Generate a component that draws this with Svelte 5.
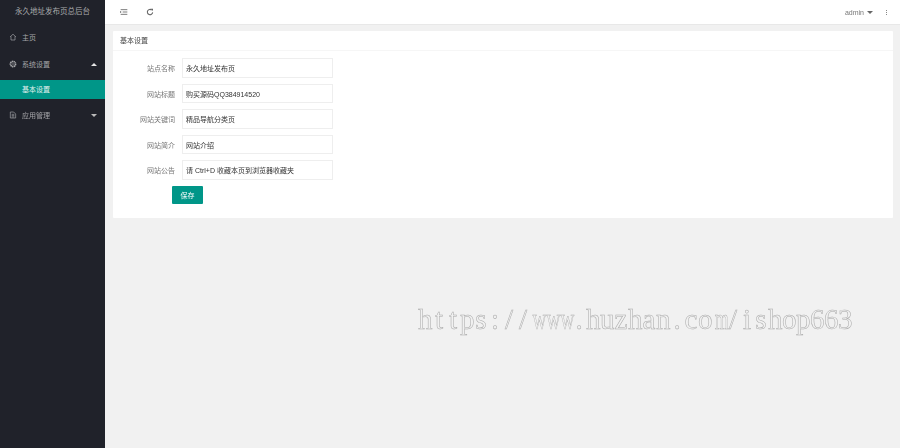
<script>
  let fields = [
    { label: '站点名称', value: '永久地址发布页' },
    { label: '网站标题', value: '购买源码QQ384914520' },
    { label: '网站关键词', value: '精品导航分类页' },
    { label: '网站简介', value: '网站介绍' },
    { label: '网站公告', value: '请 Ctrl+D 收藏本页到浏览器收藏夹' }
  ];
  // watermark is a fixed-pitch serif: squeeze the wide letters into the cell
  let squeeze = { w: 0.66, m: 0.62 };
  let mark = [...'https://www.huzhan.com/ishop663'];
</script>

<div class="app">
  <aside class="side">
    <div class="logo">永久地址发布页总后台</div>
    <nav>
      <div class="item">
        <svg class="ico" viewBox="0 0 12 12"><path d="M1.500 6 6 1.800 10.500 6M3 5v5.500h6V5" fill="none" stroke="currentColor" stroke-width="1"/></svg>
        <span>主页</span>
      </div>
      <div class="item open">
        <svg class="ico" viewBox="0 0 12 12"><circle cx="6" cy="6" r="3.800" fill="none" stroke="currentColor" stroke-width="2.600" stroke-dasharray="2 .6"/><circle cx="6" cy="6" r="1" fill="currentColor"/></svg>
        <span>系统设置</span>
        <i class="up"></i>
      </div>
      <div class="sub">基本设置</div>
      <div class="item last">
        <svg class="ico" viewBox="0 0 12 12"><path d="M2 1.500h5l3 3v6H2zM4 5h4M4 7h4M4 9h4" fill="none" stroke="currentColor" stroke-width="1"/></svg>
        <span>应用管理</span>
        <i class="down"></i>
      </div>
    </nav>
  </aside>

  <div class="main">
    <header class="top">
      <div class="tools">
        <svg class="tool" viewBox="0 0 12 12"><path d="M1 2.500h10M4 6h7M1 9.500h10M1 4.500v3" fill="none" stroke="currentColor" stroke-width="1.300"/></svg>
        <svg class="tool" viewBox="0 0 12 12"><path d="M10 6.600A4 4 0 1 1 8.600 3" fill="none" stroke="currentColor" stroke-width="1.600"/><path d="M7 1h3.500v3.500z" fill="currentColor"/></svg>
      </div>
      <div class="user">
        <span>admin</span>
        <i class="caret"></i>
        <span class="dots"><b></b><b></b><b></b></span>
      </div>
    </header>

    <div class="content">
      <section class="card">
        <div class="card-hd">基本设置</div>
        <form class="form" onsubmit={(e) => e.preventDefault()}>
          {#each fields as f (f.label)}
            <div class="row">
              <label for={f.label}>{f.label}</label>
              <input id={f.label} value={f.value} />
            </div>
          {/each}
          <button type="submit">保存</button>
        </form>
      </section>
    </div>
  </div>

  <div class="mark">{#each mark as c, i (i)}<span style={squeeze[c] ? `transform: scaleX(${squeeze[c]})` : ''}>{c}</span>{/each}</div>
</div>

<style>
  :global(body) { margin: 0; background: #f1f1f1; }
  .app { position: relative; display: flex; width: 900px; height: 448px; overflow: hidden; font-family: "Liberation Sans", "Noto Sans CJK SC", sans-serif; font-size: 7px; color: #555; filter: blur(0.3px); }
  .side { width: 105px; flex-shrink: 0; background: #20222a; color: #b5b6b8; }
  .logo { height: 24px; line-height: 24px; text-align: center; font-size: 7.500px; color: #a9aaac; }
  .item { display: flex; align-items: center; height: 26px; padding: 0 9px; gap: 5px; color: #a5a6a9; }
  .item span { flex: 1; }
  .item.open { margin-top: 1px; }
  .ico { width: 8px; height: 8px; flex-shrink: 0; }
  .up, .down { width: 0; height: 0; border-left: 3px solid transparent; border-right: 3px solid transparent; margin-right: -1px; }
  .up { border-bottom: 3px solid #e6e6e6; }
  .down { border-top: 3px solid #bbb; }
  .sub { height: 19px; line-height: 19px; margin-top: 3px; padding-left: 22px; background: #009688; color: #e3f1ef; }
  .item.last { height: 32px; }
  .main { flex: 1; min-width: 0; }
  .top { display: flex; justify-content: space-between; align-items: center; height: 24px; background: #fff; border-bottom: 1px solid #e8e8e8; padding: 0 13px 0 15px; }
  .tools { display: flex; gap: 18px; }
  .tool { width: 8px; height: 8px; color: #666; }
  .user { display: flex; align-items: center; gap: 3px; color: #777; }
  .caret { width: 0; height: 0; border-left: 3px solid transparent; border-right: 3px solid transparent; border-top: 3px solid #666; }
  .dots { display: flex; flex-direction: column; gap: 1px; margin-left: 10px; }
  .dots b { width: 1px; height: 1px; background: #888; }
  .content { padding: 6px 7px 0 8px; }
  .card { background: #fff; height: 187px; border-radius: 1px; }
  .card-hd { box-sizing: border-box; height: 20px; line-height: 19px; padding: 0 7px; border-bottom: 1px solid #f6f6f6; color: #444; }
  .form { padding-top: 7px; }
  .row { display: flex; align-items: center; height: 20px; margin-bottom: 5.500px; }
  label { width: 62px; text-align: right; color: #777; flex-shrink: 0; }
  input { width: 151px; height: 19.500px; box-sizing: border-box; margin-left: 7px; padding: 0 3px; border: 1px solid #eee; background: #fff; font: inherit; color: #333; outline: none; }
  button { display: block; margin: 0.500px 0 0 59px; width: 31px; height: 18px; padding: 0; border: 0; border-radius: 1px; background: #009688; color: #fff; font: inherit; }
  .mark { position: absolute; left: 418px; top: 303px; display: flex; font-family: "Liberation Serif", serif; font-size: 29px; line-height: 33px; color: #f1f1f1; -webkit-text-stroke: 0.500px #a8a8a8; }
  .mark span { display: block; width: 14px; flex-shrink: 0; text-align: center; }
</style>
